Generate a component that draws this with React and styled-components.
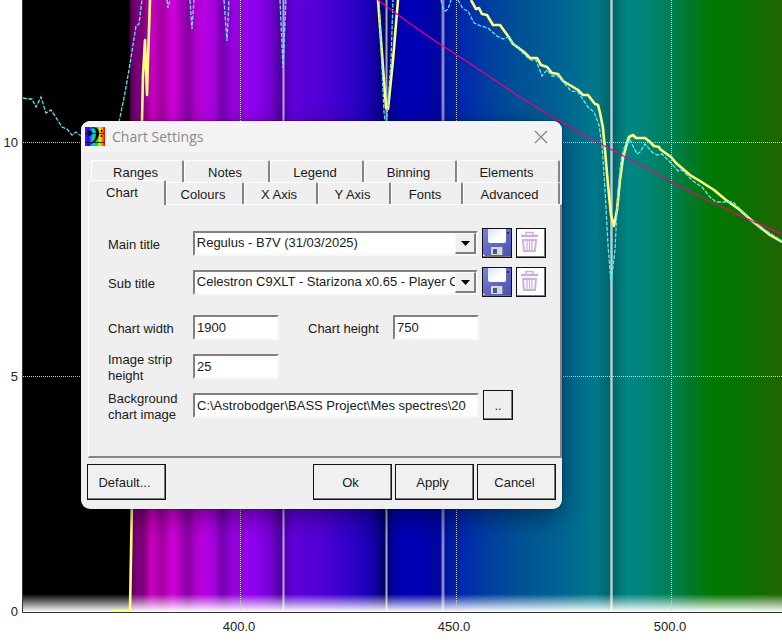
import { useState } from "react"
import styled, { createGlobalStyle } from "styled-components"

const GlobalStyle = createGlobalStyle`
  * {
    box-sizing: border-box;
  }

  body {
    margin: 0;
    background: #FFF;
    font-family: "Liberation Sans", Arial, sans-serif;
    font-size: 13px;
    color: #1A1A1A;
  }

  button, input, select {
    font: inherit;
    color: inherit;
  }
`

const Page = styled.main`
  position: relative;
  min-height: 100vh;
  overflow: hidden;
`

const ChartSvg = styled.svg`
  display: block;
  width: 100%;
  height: 100vh;
`

const AxisText = styled.text`
  font-size: 13px;
  fill: #222;
`

const Dialog = styled.section`
  position: absolute;
  top: 121px;
  left: 81px;
  width: 481px;
  max-width: 100%;
  overflow: hidden;
  background: #EFEFEF;
  border-radius: 9px;
  box-shadow: 0 8px 26px rgba(0, 0, 0, 0.4), 0 0 2px rgba(0, 0, 0, 0.6);
`

const TitleBar = styled.header`
  display: flex;
  align-items: center;
  height: 31px;
  padding: 0 14px 0 4px;
  background: #F3F3F3;
`

const Title = styled.h1`
  flex: 1;
  margin: 0 0 0 7px;
  color: #8A8A8A;
  font-family: "Open Sans", "Noto Sans", sans-serif;
  font-size: 14px;
  font-weight: 400;
`

const CloseButton = styled.button`
  display: flex;
  padding: 0;
  background: none;
  border: 0;
`

const TabArea = styled.div`
  padding: 8px 0 0 7px;
`

const TabRow = styled.div`
  display: grid;
  grid-template-columns: ${({ $columns }) => $columns};
  height: 22px;
  padding: 0 2px 0 ${({ $indent }) => $indent ? '3px' : '0'};
`

const Tab = styled.button`
  position: relative;
  margin: ${({ $active }) => $active ? '-2px 0 -1px' : '0'};
  padding: ${({ $active }) => $active ? '0 9px 1px 0' : '2px 3px 0 0'};
  background: #EFEFEF;
  border: solid;
  border-width: 1px 2px 0 1px;
  border-color: #FFF #858585 #FFF #FFF;
  border-radius: 3px 2px 0 0;
  z-index: ${({ $active }) => $active ? 1 : 0};
`

const Panel = styled.div`
  display: flex;
  flex-direction: column;
  row-gap: 9px;
  padding: 23px 14px 36px 19px;
  border: solid;
  border-width: 1px 2px 2px 1px;
  border-color: #FFF #858585 #858585 #FFF;
`

const Row = styled.div`
  display: flex;
  align-items: center;
  height: 30px;
  margin-top: ${({ $spaced }) => $spaced ? '6px' : '0'};
`

const Label = styled.label`
  width: 85px;
  line-height: 16px;
  padding-top: 4px;
`

const SideLabel = styled(Label)`
  margin-left: 29px;
`

const sunken = `
  height: 25px;
  background: #FFF;
  border: 2px solid;
  border-color: #808080 #F8F8F8 #F8F8F8 #808080;
  border-radius: 0;
  outline: 0;
`

const TextBox = styled.input`
  ${sunken}
  width: ${({ $wide }) => $wide ? '286px' : '86px'};
  min-width: 0;
  padding: 0 2px;
`

const ComboBox = styled.div`
  position: relative;
  width: 286px;
`

const Select = styled.select`
  ${sunken}
  display: block;
  width: 100%;
  padding: 0 20px 2px 2px;
  appearance: none;
`

const ComboArrow = styled.span`
  position: absolute;
  top: 2px;
  right: 2px;
  display: flex;
  align-items: center;
  justify-content: center;
  width: 21px;
  height: 21px;
  padding-top: 2px;
  background: #EFEFEF;
  border: solid;
  border-width: 1px 2px 2px 1px;
  border-color: #F8F8F8 #808080 #808080 #F8F8F8;
  pointer-events: none;
`

const SmallButton = styled.button`
  display: flex;
  align-items: center;
  justify-content: center;
  width: 30px;
  height: 30px;
  margin-left: 4px;
  padding: 0;
  background: ${({ $plain }) => $plain ? '#EFEFEF' : '#FFF'};
  border: 1px solid #111;
  box-shadow: inset -1px -1px #777;
`

const Footer = styled.footer`
  display: flex;
  column-gap: 3px;
  padding: 6px 6px 9px;
`

const FooterButton = styled.button`
  width: 79px;
  height: 36px;
  margin-right: ${({ $first }) => $first ? 'auto' : '0'};
  padding: 0 4px 0 0;
  background: #F0F0F0;
  border: 1px solid #111;
  box-shadow: inset -1px -1px #777;
`

const spectrum = [
  [22, '#000'], [129, '#000'], [131, '#5C0058'], [137, '#7C0080'], [143, '#7C0076'],
  [152, '#CA00C4'], [162, '#A200A0'], [173, '#D200DC'], [188, '#8600A0'], [196, '#B000CC'],
  [206, '#B600E4'], [214, '#A400DC'], [222, '#7400B0'], [234, '#9800E0'], [256, '#8E00F0'],
  [272, '#7000CC'], [279, '#5000A0'], [284, '#5000B0'], [294, '#6000DC'], [320, '#5000D4'],
  [346, '#3600CC'], [368, '#1C00B8'], [380, '#0A008A'], [386, '#00005C'], [393, '#0000A0'],
  [406, '#0000B8'], [424, '#0000B0'], [442, '#000898'], [448, '#0018A4'], [462, '#0028AC'],
  [490, '#0040A0'], [518, '#005096'], [560, '#006494'], [596, '#00788A'], [605, '#006C74'],
  [612, '#006068'], [619, '#007676'], [628, '#008686'], [646, '#008478'], [671, '#007E50'],
  [694, '#007822'], [712, '#007800'], [735, '#067400'], [760, '#146C00'], [782, '#206400'],
]

const reference = [
  '23,98 28,99 32,99 36,107 41,97 46,113 51,110 55,116 62,127 67,129 72,135 76,132 81,136 100,141 119,122 125,93 130,64 136,26 139,24 142,0',
  '167,0 168,8 170,0',
  '190,0 192,29 194,0',
  '224,0 227,41 229,0',
  '280,0 283,68 286,0',
  '379,0 384,112 386,130 391,60 393,0',
  '441,0 443,8 445,11 448,9 451,0',
  '458,0 463,9 468,11 474,23 481,26 488,28 497,36 503,39 508,37 514,45 520,50 527,57 531,60 536,60 542,76 547,70 552,76 558,76 571,91 578,92 588,107 594,112 599,125 602,145 605,190 608,245 611,284 615,250 618,190 621,160 625,145 630,140 637,154 640,152 645,144 652,152 657,155 662,154 671,163 678,171 682,170 693,181 702,187 710,197 716,202 726,202 733,202 740,209 750,220 765,230 782,241',
]

const measured = [
  '111,611 130,611 132,500 142,121 143,75 145,40 147,95 148,60 150,0',
  '378,0 386,108 388,109 393,60 398,0',
  '471,0 476,9 479,8 482,14 487,15 493,25 500,25 508,36 513,44 520,49 524,52 530,58 537,58 541,65 547,67 552,73 558,74 563,81 578,90 583,95 588,95 595,104 598,105 600,113 603,128 605,150 608,185 611,215 614,226 617,210 620,180 623,158 627,143 629,137 633,135 636,138 641,138 645,138 649,141 654,146 659,147 660,149 664,152 671,157 676,163 690,175 700,181 714,190 726,200 740,210 751,220 770,235 782,242',
]

const SpectrumChart = () => (
  <ChartSvg viewBox="0 0 782 642" preserveAspectRatio="xMinYMin slice" role="img" aria-label="Spectrum chart">
    <defs>
      <linearGradient id="spectrum" gradientUnits="userSpaceOnUse" x1="22" y1="0" x2="782" y2="0">
        {spectrum.map(([x, color]) => (
          <stop key={x} offset={(x - 22) / 760} stopColor={color} />
        ))}
      </linearGradient>
      <linearGradient id="fade" x1="0" y1="0" x2="0" y2="1">
        <stop offset="0" stopColor="#FFF" stopOpacity="0" />
        <stop offset="1" stopColor="#FFF" />
      </linearGradient>
    </defs>
    <rect x="22" y="0" width="760" height="612" fill="url(#spectrum)" />
    <rect x="23" y="594" width="759" height="18" fill="url(#fade)" />
    <g fill="none" stroke="#D0D0D0" strokeDasharray="1 1">
      <path d="M240.5 0V611M456.5 0V611M671.5 0V611" />
      <path d="M23 142.5H782M23 376.5H782" />
    </g>
    <g fill="none" stroke="#FFF">
      <path d="M283.5 0V611M386.5 0V611" strokeWidth="2" opacity=".65" />
      <path d="M443 0V611" strokeWidth="3" opacity=".5" />
      <path d="M611.5 0V611" strokeWidth="3" opacity=".5" />
      <path d="M611.5 0V611" opacity=".4" />
    </g>
    <g fill="none" stroke="#FFFF80" strokeWidth="2.6" strokeLinejoin="round">
      {measured.map((points) => <polyline key={points} points={points} />)}
    </g>
    <g fill="none" stroke="#62E8F0" strokeWidth="1.3" strokeDasharray="4 1.5">
      {reference.map((points) => <polyline key={points} points={points} />)}
    </g>
    <path d="M378 0Q418 30 443 46T520 97Q566 126 612 150T671 182Q722 208 750 220L782 234" fill="none" stroke="#F0007C" strokeWidth="1.2" />
    <path d="M22.5 0V612.5H782" fill="none" stroke="#333" />
    <AxisText x="18" y="147" textAnchor="end">10</AxisText>
    <AxisText x="18" y="381" textAnchor="end">5</AxisText>
    <AxisText x="18" y="616" textAnchor="end">0</AxisText>
    <AxisText x="239" y="631" textAnchor="middle">400.0</AxisText>
    <AxisText x="454" y="631" textAnchor="middle">450.0</AxisText>
    <AxisText x="670" y="631" textAnchor="middle">500.0</AxisText>
  </ChartSvg>
)

const AppIcon = () => (
  <svg width="20" height="19" viewBox="0 0 20 19" aria-hidden="true">
    <defs>
      <linearGradient id="rainbow">
        <stop offset="0" stopColor="#70F" />
        <stop offset=".18" stopColor="#20F" />
        <stop offset=".38" stopColor="#0CF" />
        <stop offset=".58" stopColor="#0D3" />
        <stop offset=".76" stopColor="#EE0" />
        <stop offset=".88" stopColor="#F70" />
        <stop offset="1" stopColor="#E00" />
      </linearGradient>
    </defs>
    <rect width="20" height="19" fill="url(#rainbow)" />
    <path d="M0 6.5H20M0 15.5H20" stroke="#000" strokeWidth=".7" />
    <circle cx="4.8" cy="6" r="2.6" />
    <path d="M5 2C6 .8 7 .3 8.5 .3c4 0 6 3 5.5 7C13.5 13 8 17 3 18.5 8 15.5 10.7 12 11 7 11.1 3 10 1.3 8 1.3 6.5 1.3 5.5 2 5 2Z" />
    <path d="M16.5 3v2M16.5 8v2" stroke="#000" strokeWidth="1.5" />
  </svg>
)

const SaveIcon = () => (
  <svg width="28" height="28" viewBox="0 0 28 28" aria-hidden="true">
    <defs>
      <linearGradient id="disk" x1="0" y1="0" x2="1" y2="1">
        <stop offset="0" stopColor="#7C80D8" />
        <stop offset="1" stopColor="#4C50AC" />
      </linearGradient>
      <linearGradient id="paper" x1="0" y1="0" x2="1" y2="1">
        <stop offset="0" stopColor="#D8E4F8" />
        <stop offset=".6" stopColor="#FFF" />
      </linearGradient>
    </defs>
    <path d="M0 0H28V27H2L0 25Z" fill="url(#disk)" />
    <path d="M5 0H23V12Q23 14 21 14H7Q5 14 5 12Z" fill="url(#paper)" />
    <rect x="24" y="3" width="2" height="2" fill="#282868" />
    <rect x="8" y="18" width="12" height="8" fill="#D2D8DC" />
    <rect x="10" y="20" width="4" height="5" fill="#406080" />
    <path d="M19.5 18V26" stroke="#8888B8" />
  </svg>
)

const TrashIcon = () => (
  <svg width="28" height="28" viewBox="0 0 28 28" fill="none" stroke="#CDB0DE" aria-hidden="true">
    <path d="M4 7H21" strokeWidth="2.5" />
    <path d="M9 6V3.5H16V6" strokeWidth="1.5" />
    <path d="M6 11H19L18 22H7Z" strokeWidth="2" />
    <path d="M10 11V22M12.5 11V22M15 11V22" strokeWidth="1.3" />
  </svg>
)

const TitleRow = ({ id, label, value }) => (
  <Row>
    <Label htmlFor={id}>{label}</Label>
    <ComboBox>
      <Select id={id}>
        <option>{value}</option>
      </Select>
      <ComboArrow>
        <svg width="9" height="5" viewBox="0 0 9 5"><path d="M0 0H9L4.5 5Z" /></svg>
      </ComboArrow>
    </ComboBox>
    <SmallButton type="button" aria-label={`Save ${label}`}><SaveIcon /></SmallButton>
    <SmallButton type="button" aria-label={`Delete ${label}`}><TrashIcon /></SmallButton>
  </Row>
)

const topTabs = ['Ranges', 'Notes', 'Legend', 'Binning', 'Elements']
const bottomTabs = ['Chart', 'Colours', 'X Axis', 'Y Axis', 'Fonts', 'Advanced']

const App = () => {
  const [active, setActive] = useState('Chart')

  const renderTab = (name) => (
    <Tab
      key={name}
      type="button"
      role="tab"
      aria-selected={active === name}
      $active={active === name}
      onClick={() => setActive(name)}
    >
      {name}
    </Tab>
  )

  return (
    <Page>
      <GlobalStyle />
      <SpectrumChart />
      <Dialog role="dialog" aria-labelledby="dialog-title">
        <TitleBar>
          <AppIcon />
          <Title id="dialog-title">Chart Settings</Title>
          <CloseButton type="button" aria-label="Close">
            <svg width="14" height="14" viewBox="0 0 14 14" stroke="#858585" strokeWidth="1.2">
              <path d="M1 1L13 13M13 1L1 13" />
            </svg>
          </CloseButton>
        </TitleBar>
        <TabArea>
          <div role="tablist">
            <TabRow $columns="93fr 86fr 94fr 93fr 103fr" $indent>{topTabs.map(renderTab)}</TabRow>
            <TabRow $columns="78fr 78fr 74fr 73fr 72fr 97fr">{bottomTabs.map(renderTab)}</TabRow>
          </div>
          <Panel role="tabpanel">
            <TitleRow id="main-title" label="Main title" value="Regulus - B7V (31/03/2025)" />
            <TitleRow id="sub-title" label="Sub title" value="Celestron C9XLT - Starizona x0.65 - Player C" />
            <Row $spaced>
              <Label htmlFor="chart-width">Chart width</Label>
              <TextBox id="chart-width" defaultValue="1900" />
              <SideLabel htmlFor="chart-height">Chart height</SideLabel>
              <TextBox id="chart-height" defaultValue="750" />
            </Row>
            <Row>
              <Label htmlFor="strip-height">Image strip<br />height</Label>
              <TextBox id="strip-height" defaultValue="25" />
            </Row>
            <Row>
              <Label htmlFor="background">Background<br />chart image</Label>
              <TextBox id="background" $wide defaultValue="C:\Astrobodger\BASS Project\Mes spectres\20" />
              <SmallButton type="button" aria-label="Browse" $plain>..</SmallButton>
            </Row>
          </Panel>
        </TabArea>
        <Footer>
          <FooterButton type="button" $first>Default...</FooterButton>
          <FooterButton type="button">Ok</FooterButton>
          <FooterButton type="button">Apply</FooterButton>
          <FooterButton type="button">Cancel</FooterButton>
        </Footer>
      </Dialog>
    </Page>
  )
}

export default App
